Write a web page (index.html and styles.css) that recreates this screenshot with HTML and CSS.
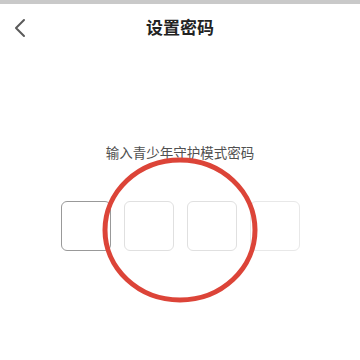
FILE: index.html
```html
<!DOCTYPE html>
<html lang="zh-CN">
  <head>
    <meta charset="UTF-8" />
    <meta name="viewport" content="width=device-width, initial-scale=1.0" />
    <title>设置密码</title>
    <link rel="stylesheet" href="styles.css">
  </head>
  <body>
    <div class="status-bar"></div>
    <div class="header">
      <a class="back" href="#">
        <svg width="12" height="20" viewBox="0 0 12 20">
          <path d="M10 2 L2 10 L10 18" fill="none" stroke="#5a5a5a" stroke-width="2" stroke-linecap="round" stroke-linejoin="round" />
        </svg>
      </a>
      <h1>设置密码</h1>
    </div>

    <div class="content">
      <p class="hint">输入青少年守护模式密码</p>
      <div class="code-boxes">
        <div class="box active"></div>
        <div class="box"></div>
        <div class="box"></div>
        <div class="box light"></div>
      </div>

      <svg class="circle-mark" width="170" height="160" viewBox="0 0 170 160">
        <ellipse cx="85" cy="80" rx="75" ry="70" fill="none" stroke="#dc4438" stroke-width="5" />
      </svg>
    </div>
  </body>
</html>
```

FILE: styles.css
```css
* {
  margin: 0;
  padding: 0;
  box-sizing: border-box;
  font-family: "Noto Sans CJK SC", "Noto Sans", sans-serif;
}

body {
  background: #fff;
  width: 360px;
  height: 360px;
  overflow: hidden;
}

.status-bar {
  height: 4px;
  background: #c9c9c9;
}

.header {
  height: 44px;
  display: flex;
  align-items: center;
  justify-content: center;
  position: relative;
}

.back {
  position: absolute;
  left: 14px;
  top: 14px;
  display: flex;
}

.header h1 {
  font-size: 17px;
  font-weight: bold;
  color: #222;
}

.content {
  position: relative;
  padding-top: 94px;
}

.hint {
  text-align: center;
  font-size: 13.5px;
  color: #505050;
  line-height: 20px;
}

.code-boxes {
  display: flex;
  justify-content: center;
  gap: 13px;
  margin-top: 39px;
  padding-left: 1px;
}

.box {
  width: 50px;
  height: 50px;
  border: 1.5px solid #e0e0e0;
  border-radius: 6px;
}

.box.active {
  border-color: #999;
}

.box.light {
  border-color: #e8e8e8;
}

.circle-mark {
  position: absolute;
  left: 95px;
  top: 102px;
}
```
